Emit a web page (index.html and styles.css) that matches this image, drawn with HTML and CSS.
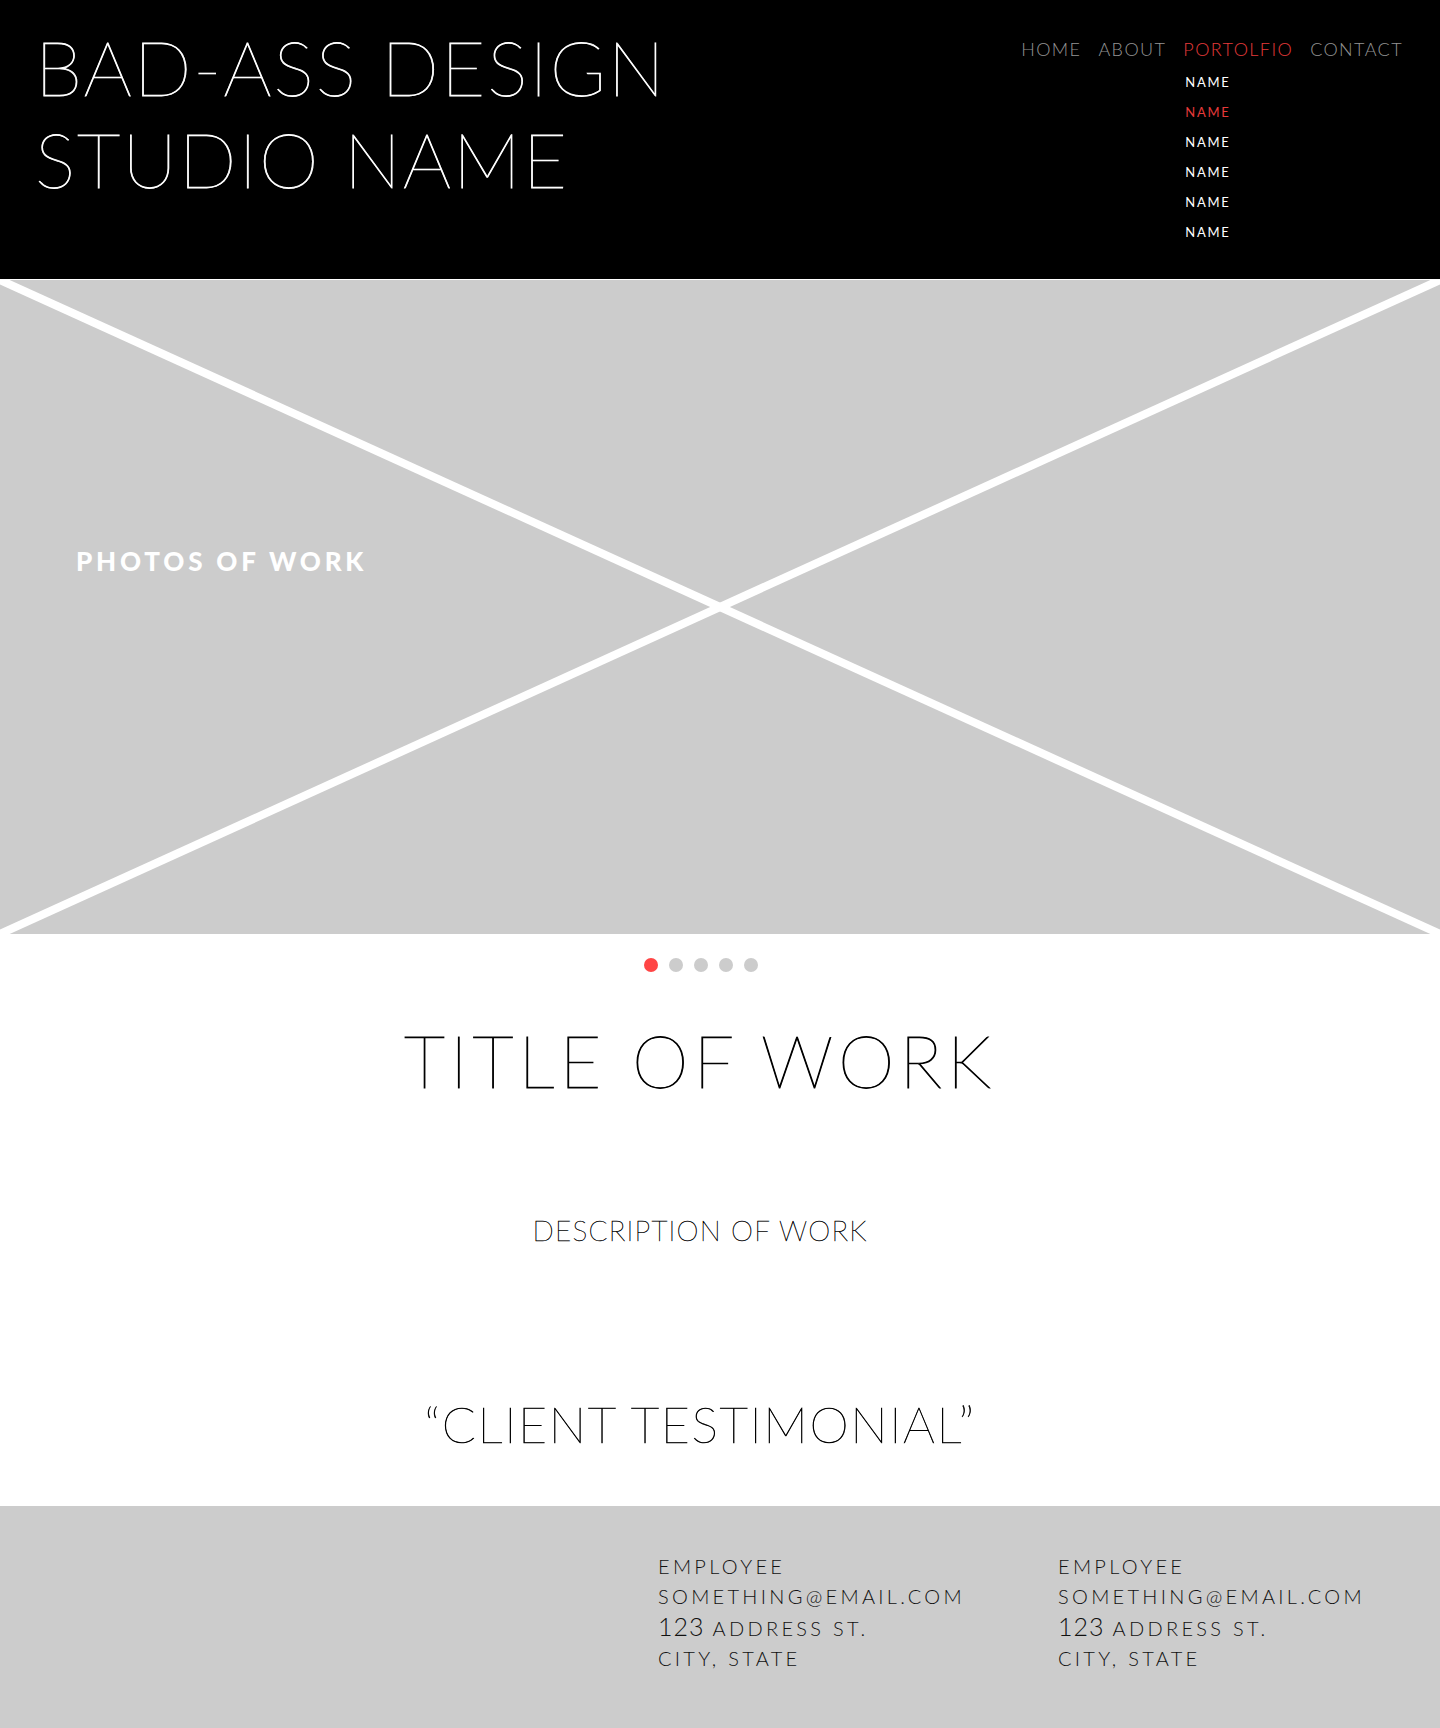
FILE: index.html
```html
<!DOCTYPE html>
<html lang="en">
<head>
<meta charset="utf-8">
<title>Bad-Ass Design Studio</title>
<link rel="stylesheet" href="styles.css">
</head>
<body>
<header class="site-header">
  <h1 class="brand">BAD-ASS DESIGN<br>STUDIO NAME</h1>
  <nav class="main-nav">
    <ul class="nav-list">
      <li class="nav-item"><a href="#">HOME</a></li>
      <li class="nav-item"><a href="#">ABOUT</a></li>
      <li class="nav-item is-active"><a href="#">PORTOLFIO</a>
        <ul class="sub-nav">
          <li><a href="#">NAME</a></li>
          <li class="is-current"><a href="#">NAME</a></li>
          <li><a href="#">NAME</a></li>
          <li><a href="#">NAME</a></li>
          <li><a href="#">NAME</a></li>
          <li><a href="#">NAME</a></li>
        </ul>
      </li>
      <li class="nav-item"><a href="#">CONTACT</a></li>
    </ul>
  </nav>
</header>

<section class="hero">
  <svg class="hero-x" viewBox="0 0 1440 654" preserveAspectRatio="none" aria-hidden="true">
    <line x1="0" y1="0" x2="1440" y2="654"></line>
    <line x1="1440" y1="0" x2="0" y2="654"></line>
  </svg>
  <p class="hero-caption">PHOTOS OF WORK</p>
</section>

<div class="dots">
  <span class="dot is-active"></span>
  <span class="dot"></span>
  <span class="dot"></span>
  <span class="dot"></span>
  <span class="dot"></span>
</div>

<main class="work">
  <h2 class="work-title">TITLE OF WORK</h2>
  <p class="work-desc">DESCRIPTION OF WORK</p>
  <blockquote class="work-quote">“CLIENT TESTIMONIAL”</blockquote>
</main>

<footer class="site-footer">
  <div class="contact">
    <p>EMPLOYEE</p>
    <p>SOMETHING@EMAIL.COM</p>
    <p><span class="num">123</span> ADDRESS ST.</p>
    <p>CITY, STATE</p>
  </div>
  <div class="contact">
    <p>EMPLOYEE</p>
    <p>SOMETHING@EMAIL.COM</p>
    <p><span class="num">123</span> ADDRESS ST.</p>
    <p>CITY, STATE</p>
  </div>
</footer>
</body>
</html>
```

FILE: styles.css
```css
* { box-sizing: border-box; }

html, body {
  margin: 0;
  padding: 0;
  background: #fff;
  font-family: "Lato", "Open Sans", sans-serif;
}

a { color: inherit; text-decoration: none; }
ul { list-style: none; margin: 0; padding: 0; }
p, h1, h2, blockquote { margin: 0; }

/* Header */
.site-header {
  background: #000;
  height: 280px;
  border-bottom: 1px solid #fff;
  display: flex;
  justify-content: space-between;
  align-items: flex-start;
  padding: 21px 37px 0 35px;
}

.brand {
  color: #fff;
  font-family: "Lato", sans-serif;
  font-weight: 100;
  font-size: 76px;
  line-height: 92px;
  letter-spacing: 1.9px;
  -webkit-text-stroke: 0.8px #fff;
}

.main-nav { padding-top: 17px; }

.nav-list {
  display: flex;
  gap: 17px;
}

.nav-item {
  position: relative;
  color: #949494;
  font-size: 18px;
  font-weight: 300;
  letter-spacing: 1.4px;
  line-height: 22px;
}

.nav-item.is-active { color: #e53a3a; }

.sub-nav {
  position: absolute;
  left: 2px;
  top: 36px;
  display: flex;
  flex-direction: column;
  gap: 14px;
}

.sub-nav li {
  color: #fff;
  font-size: 13px;
  font-weight: 400;
  letter-spacing: 1.7px;
  line-height: 16px;
}

.sub-nav li.is-current { color: #e53a3a; }

/* Hero */
.hero {
  position: relative;
  height: 654px;
  background: #cccccc;
  display: flex;
  align-items: center;
  padding-left: 76px;
  overflow: hidden;
}

.hero-x {
  position: absolute;
  inset: 0;
  width: 100%;
  height: 100%;
}

.hero-x line {
  stroke: #fff;
  stroke-width: 8;
  vector-effect: non-scaling-stroke;
}

.hero-caption {
  position: relative;
  color: #fff;
  font-weight: 900;
  font-size: 26px;
  letter-spacing: 3.8px;
  margin-top: -92px;
}

/* Dots */
.dots {
  display: flex;
  justify-content: center;
  gap: 11px;
  padding: 24px 0 0 0;
  margin-left: -38px;
}

.dot {
  width: 14px;
  height: 14px;
  border-radius: 50%;
  background: #cccccc;
}

.dot.is-active { background: #ff4545; }

/* Work */
.work {
  display: flex;
  flex-direction: column;
  align-items: center;
  text-align: center;
  height: 534px;
  padding: 45px 40px 0 0;
}

.work-title {
  font-weight: 100;
  font-size: 72px;
  line-height: 86px;
  letter-spacing: 5px;
  color: #000;
  -webkit-text-stroke: 0.9px #000;
}

.work-desc {
  margin-top: 110px;
  font-weight: 100;
  font-size: 28px;
  letter-spacing: 1.2px;
  color: #000;
  -webkit-text-stroke: 0.4px #000;
}

.work-quote {
  margin-top: 147px;
  font-weight: 100;
  font-size: 50px;
  letter-spacing: 1.6px;
  color: #000;
  -webkit-text-stroke: 0.6px #000;
}

/* Footer */
.site-footer {
  background: #cccccc;
  height: 222px;
  display: grid;
  grid-template-columns: 400px 400px;
  padding: 45px 0 0 658px;
}

.contact p {
  font-weight: 300;
  font-size: 20px;
  line-height: 30px;
  letter-spacing: 3.3px;
  color: #111;
}

.contact .num {
  font-size: 25px;
  letter-spacing: 1px;
}
```
